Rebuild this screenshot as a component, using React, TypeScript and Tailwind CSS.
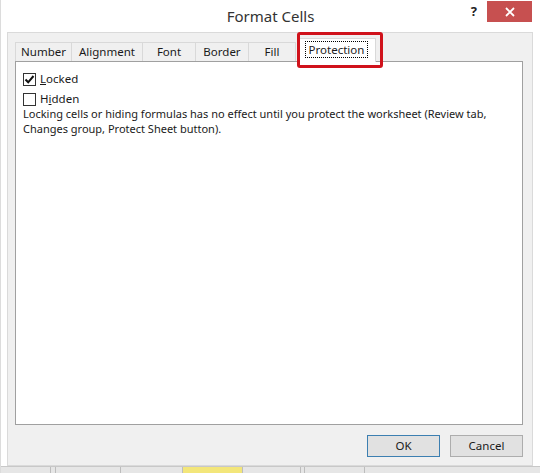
import React from "react";

const tabs = [
  { label: "Number", w: "w-[57px]" },
  { label: "Alignment", w: "w-[72px]" },
  { label: "Font", w: "w-[54px]" },
  { label: "Border", w: "w-[54px]" },
  { label: "Fill", w: "w-[48px]" },
];

function CheckBox({ checked }: { checked?: boolean }) {
  return (
    <span className="w-[13px] h-[13px] border border-[#333333] bg-white flex items-center justify-center">
      {checked && (
        <svg width="11" height="11" viewBox="0 0 11 11">
          <path d="M1.5 5.5 L4.2 8.3 L9.5 2" fill="none" stroke="#111" strokeWidth="2" />
        </svg>
      )}
    </span>
  );
}

export default function App() {
  return (
    <div
      className="w-[540px] h-[473px] bg-white flex flex-col overflow-hidden border-l border-[#dcdcdc] text-[#1a1a1a]"
      style={{ fontFamily: "'Noto Sans', 'Open Sans', sans-serif" }}
    >
      {/* Title bar */}
      <div className="h-[32px] grid grid-cols-[1fr_auto_1fr]">
        <div />
        <div className="pt-[5px] text-[15px] text-[#333333]">Format Cells</div>
        <div className="flex justify-end items-start pr-[8px] pt-[1px]">
          <span className="mt-[4px] mr-[10px] text-[13px] font-bold leading-none text-[#222]">?</span>
          <button className="w-[45px] h-[21px] bg-[#c75050] flex items-center justify-center">
            <svg width="10" height="10" viewBox="0 0 10 10">
              <path d="M1 1 L9 9 M9 1 L1 9" stroke="white" strokeWidth="1.8" />
            </svg>
          </button>
        </div>
      </div>

      {/* Dialog body */}
      <div className="ml-[6px] w-[526px] h-[434px] bg-[#f0f0f0] border border-[#dadada] pt-[5px] pl-[7px] pr-[9px] flex flex-col">
        {/* Tabs */}
        <div className="flex items-end h-[23px] relative z-10">
          {tabs.map((t) => (
            <div
              key={t.label}
              className={`${t.w} h-[19px] border border-b-0 border-[#d9d9d9] bg-[#f0f0f0] -ml-px first:ml-0 flex items-center justify-center text-[11.5px]`}
            >
              {t.label}
            </div>
          ))}
          <div className="relative ml-[1px] w-[79px] h-[24px] -mb-px bg-white border border-b-0 border-[#d9d9d9] flex items-start justify-center pt-[2px]">
            <span className="px-[3px] border border-dotted border-black text-[11.5px] leading-[15px]">Protection</span>
            <div className="absolute -left-[1px] -top-[7px] w-[86px] h-[36px] border-[3px] border-[#d0121b] rounded-[3px]" />
          </div>
        </div>

        {/* Panel */}
        <div className="h-[364px] bg-white border border-[#a0a0a0] pt-[7px] pl-[7px] text-[11px]">
          <div className="flex items-center gap-[4px] h-[20px] text-[11.5px]">
            <CheckBox checked />
            <span>
              <span className="underline">L</span>ocked
            </span>
          </div>
          <div className="flex items-center gap-[4px] h-[20px] text-[11.5px]">
            <CheckBox />
            <span>
              H<span className="underline">i</span>dden
            </span>
          </div>
          <p className="leading-[15px] mt-[-3px] whitespace-nowrap">
            Locking cells or hiding formulas has no effect until you protect the worksheet (Review tab,
            <br />
            Changes group, Protect Sheet button).
          </p>
        </div>

        {/* Buttons */}
        <div className="flex justify-end gap-[10px] mt-[10px]">
          <button className="w-[73px] h-[22px] bg-[#e1e1e1] border border-[#3c7fb1] text-[11.5px]">OK</button>
          <button className="w-[73px] h-[22px] bg-[#e1e1e1] border border-[#adadad] text-[11.5px]">Cancel</button>
        </div>
      </div>

      {/* Sheet strip behind */}
      <div className="flex-1 flex border-t border-[#c8c8c8] bg-[#e6e6e6]">
        <div className="w-[50px] border-r border-[#bdbdbd]" />
        <div className="w-[5px] border-r border-[#bdbdbd]" />
        <div className="w-[65px] border-r border-[#bdbdbd]" />
        <div className="w-[62px] border-r border-[#bdbdbd]" />
        <div className="w-[60px] bg-[#f3e67a] border-r border-[#bdbdbd]" />
        <div className="w-[58px] border-r border-[#bdbdbd]" />
        <div className="w-[4px] border-r border-[#bdbdbd]" />
        <div className="w-[60px] border-r border-[#bdbdbd]" />
        <div className="flex-1" />
      </div>
    </div>
  );
}
